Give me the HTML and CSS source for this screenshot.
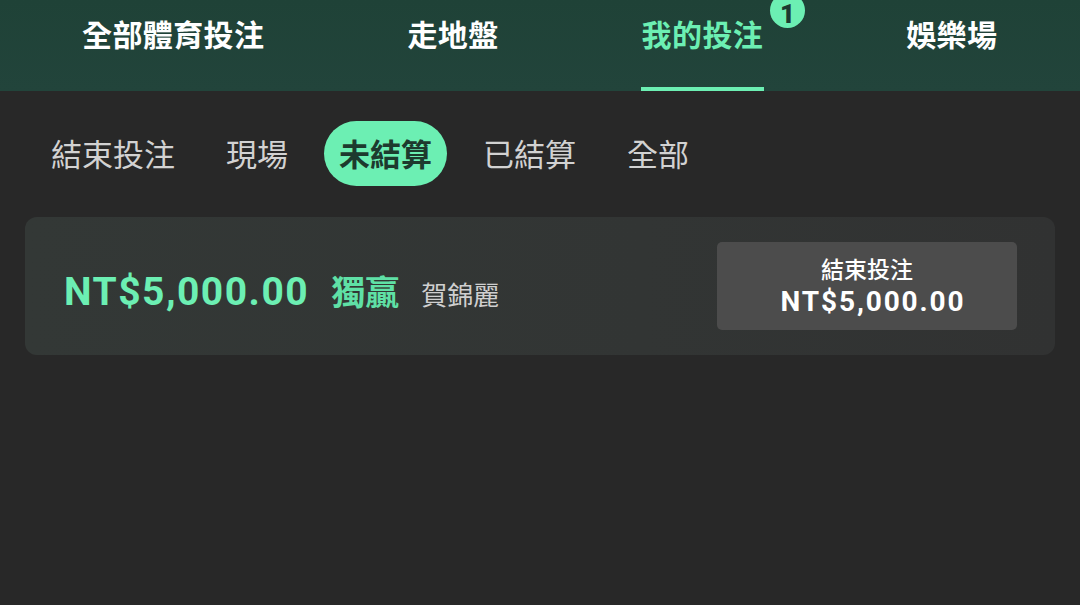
FILE: index.html
```html
<!DOCTYPE html>
<html lang="zh-Hant">

<head>
  <meta charset="UTF-8">
  <meta name="viewport" content="width=device-width, initial-scale=1.0">
  <title>我的投注</title>
  <link rel="stylesheet" href="styles.css">
</head>

<body>
  <header class="topbar">
    <nav class="tabs">
      <a class="tab">全部體育投注</a>
      <a class="tab">走地盤</a>
      <a class="tab active">我的投注<span class="badge">1</span></a>
      <a class="tab">娛樂場</a>
    </nav>
  </header>

  <div class="filters">
    <button class="filter">結束投注</button>
    <button class="filter">現場</button>
    <button class="filter selected">未結算</button>
    <button class="filter">已結算</button>
    <button class="filter">全部</button>
  </div>

  <div class="bets">
    <div class="bet-card">
      <div class="bet-info">
        <span class="stake">NT$5,000.00</span>
        <span class="market">獨贏</span>
        <span class="selection">賀錦麗</span>
      </div>
      <button class="cashout">
        <span class="cashout-label">結束投注</span>
        <span class="cashout-amount">NT$5,000.00</span>
      </button>
    </div>
  </div>
</body>

</html>
```

FILE: styles.css
```css
* {
  margin: 0;
  padding: 0;
  box-sizing: border-box;
}

body {
  background: #282828;
  font-family: 'Noto Sans CJK TC', 'Noto Sans', sans-serif;
  color: #d4d4d4;
  height: 605px;
  overflow: hidden;
}

.topbar {
  height: 91px;
  background: linear-gradient(180deg, #1f4237 0%, #22443b 100%);
}

.tabs {
  display: flex;
  height: 100%;
  padding-left: 81px;
  gap: 141px;
}

.tab {
  position: relative;
  display: flex;
  align-items: center;
  height: 100%;
  padding: 0 1px 25px;
  font-size: 30px;
  font-weight: 700;
  color: #ffffff;
  letter-spacing: 0.4px;
}

.tab.active {
  color: #6cefb3;
}

.tab.active::after {
  content: '';
  position: absolute;
  left: 0;
  right: 0;
  bottom: 0;
  height: 4px;
  background: #6cefb3;
}

.badge {
  position: absolute;
  top: -7px;
  right: -41px;
  width: 35px;
  height: 35px;
  border-radius: 50%;
  background: #6cefb3;
  color: #1c3a30;
  font-family: 'Roboto', sans-serif;
  font-size: 26px;
  font-weight: 900;
  display: flex;
  justify-content: center;
  align-items: center;
  padding-top: 6px;
}

.filters {
  display: flex;
  align-items: center;
  gap: 21px;
  padding: 30px 0 0 35px;
}

.filter {
  height: 65px;
  padding: 0 15px 2px;
  border: none;
  border-radius: 33px;
  background: none;
  color: #d2d2d2;
  font-family: 'Noto Sans CJK TC', sans-serif;
  font-size: 31px;
  font-weight: 400;
  cursor: pointer;
}

.filter:first-child {
  padding-left: 16px;
}

.filter.selected {
  background: #6cefb3;
  color: #1d3a2e;
  font-weight: 700;
}

.bets {
  padding: 31px 25px 0;
}

.bet-card {
  display: flex;
  justify-content: space-between;
  align-items: center;
  height: 138px;
  padding: 0 38px 0 39px;
  border-radius: 12px;
  background: linear-gradient(90deg, #333836 0%, #323534 60%, #313232 100%);
}

.bet-info {
  display: flex;
  align-items: baseline;
  gap: 22px;
  padding-top: 8px;
}

.stake {
  font-family: 'Roboto', sans-serif;
  font-size: 39px;
  font-weight: 700;
  letter-spacing: 1.5px;
  color: #6cefb3;
}

.market {
  font-size: 34px;
  font-weight: 700;
  color: #5fe0a6;
}

.selection {
  font-size: 26px;
  color: #cfcfcf;
}

.cashout {
  display: flex;
  flex-direction: column;
  align-items: center;
  justify-content: center;
  width: 300px;
  height: 88px;
  padding-top: 2px;
  border: none;
  border-radius: 5px;
  background: #4c4c4c;
  color: #ffffff;
  cursor: pointer;
}

.cashout-label {
  font-family: 'Noto Sans CJK TC', sans-serif;
  font-size: 23px;
  font-weight: 500;
  line-height: 30px;
}

.cashout-amount {
  font-family: 'Roboto', sans-serif;
  font-size: 28px;
  font-weight: 700;
  line-height: 38px;
  letter-spacing: 1.9px;
  padding-left: 12px;
}
```
